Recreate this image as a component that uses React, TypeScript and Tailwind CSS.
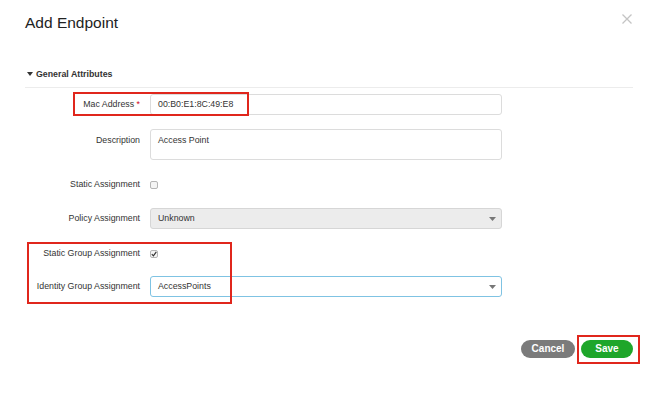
import React from "react";

function Caret() {
  return (
    <svg width="7" height="4" viewBox="0 0 7 4" className="absolute right-[5px] top-1/2 -translate-y-1/2">
      <path d="M0 0 L7 0 L3.5 4 Z" fill="#777" />
    </svg>
  );
}

function Label({ children }: { children: React.ReactNode }) {
  return <div className="w-[115px] shrink-0 text-right text-[8.8px] text-[#333]">{children}</div>;
}

export default function App() {
  return (
    <div
      className="relative w-[658px] h-[404px] bg-white overflow-hidden"
      style={{ fontFamily: '"Liberation Sans", Arial, sans-serif' }}
    >
      {/* Header */}
      <div className="flex items-start justify-between pl-[25px] pr-[26px] pt-[12px]">
        <div className="text-[15.5px] text-[#222] leading-[22px]">Add Endpoint</div>
        <svg width="10" height="10" viewBox="0 0 10 10" className="mt-[2px]">
          <path d="M0.5 0.5 L9.5 9.5 M9.5 0.5 L0.5 9.5" stroke="#c4c4c4" strokeWidth="1.3" />
        </svg>
      </div>

      {/* Section header */}
      <div className="mx-[25px] mt-[34px] flex items-center gap-[3px] pb-[7px] border-b border-[#ececec]">
        <svg width="6" height="4" viewBox="0 0 6 4" className="ml-[2px]">
          <path d="M0 0 L6 0 L3 4 Z" fill="#333" />
        </svg>
        <span className="text-[8.8px] font-bold text-[#333] leading-[12px]">General Attributes</span>
      </div>

      {/* Form */}
      <div className="ml-[25px] mt-[6px] flex flex-col">
        {/* Mac Address */}
        <div className="flex items-center h-[21px]">
          <Label>
            Mac Address <span className="text-[#d0021b]">*</span>
          </Label>
          <div className="ml-[10px] w-[352px] h-[21px] border border-[#dcdcdc] rounded-[3px] flex items-center px-[7px] text-[8.8px] text-[#333]">
            00:B0:E1:8C:49:E8
          </div>
        </div>

        {/* Description */}
        <div className="flex items-start mt-[14px] h-[31px]">
          <div className="pt-[5px]">
            <Label>Description</Label>
          </div>
          <div className="ml-[10px] w-[352px] h-[31px] border border-[#dcdcdc] rounded-[3px] px-[7px] pt-[4px] text-[8.8px] text-[#333]">
            Access Point
          </div>
        </div>

        {/* Static Assignment */}
        <div className="flex items-center mt-[14px] h-[21px]">
          <Label>Static Assignment</Label>
          <div className="ml-[10px] w-[8px] h-[8px] border border-[#b5b5b5] rounded-[2px] bg-[#f4f4f4]" />
        </div>

        {/* Policy Assignment */}
        <div className="flex items-center mt-[13px] h-[21px]">
          <Label>Policy Assignment</Label>
          <div className="relative ml-[10px] w-[352px] h-[21px] border border-[#d6d6d6] rounded-[3px] bg-[#ececec] flex items-center px-[7px] text-[8.8px] text-[#333]">
            Unknown
            <Caret />
          </div>
        </div>

        {/* Static Group Assignment */}
        <div className="flex items-center mt-[14px] h-[21px]">
          <Label>Static Group Assignment</Label>
          <div className="ml-[10px] w-[8px] h-[8px] border border-[#b5b5b5] rounded-[2px] bg-[#f4f4f4] flex items-center justify-center">
            <svg width="6" height="6" viewBox="0 0 6 6">
              <path d="M0.8 3.2 L2.4 4.8 L5.3 0.9" stroke="#333" strokeWidth="1.2" fill="none" />
            </svg>
          </div>
        </div>

        {/* Identity Group Assignment */}
        <div className="flex items-center mt-[12px] h-[21px]">
          <Label>Identity Group Assignment</Label>
          <div className="relative ml-[10px] w-[352px] h-[21px] border border-[#7fc3e3] rounded-[3px] bg-white flex items-center px-[7px] text-[8.8px] text-[#333]">
            AccessPoints
            <Caret />
          </div>
        </div>
      </div>

      {/* Buttons */}
      <div className="flex justify-end gap-[6px] pr-[25px] mt-[43px]">
        <button className="w-[54px] h-[18px] rounded-full bg-[#7b7b7b] text-white text-[10px] font-bold leading-[18px]">
          Cancel
        </button>
        <button className="w-[52px] h-[18px] rounded-full bg-[#1ea62a] text-white text-[10px] font-bold leading-[18px]">
          Save
        </button>
      </div>

      {/* Annotation boxes */}
      <div className="absolute left-[73px] top-[92px] w-[176px] h-[24px] border-2 border-[#e0261c] pointer-events-none" />
      <div className="absolute left-[27px] top-[242px] w-[205px] h-[62px] border-2 border-[#e0261c] pointer-events-none" />
      <div className="absolute left-[577px] top-[335px] w-[63px] h-[29px] border-2 border-[#e0261c] pointer-events-none" />
    </div>
  );
}
